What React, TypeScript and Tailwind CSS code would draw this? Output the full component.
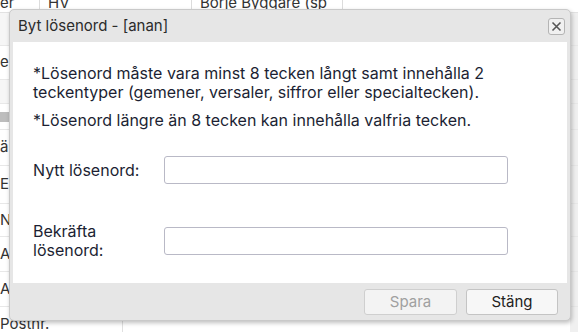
const FONT = "font-['Inter','Noto_Sans',sans-serif]";

type Row = { label: string; h: number; bar?: boolean; shade?: boolean };

const LEFT_ROWS: Row[] = [
  { label: "", h: 33, shade: true },
  { label: "er", h: 34 },
  { label: "", h: 24, shade: true },
  { label: "", h: 26, bar: true },
  { label: "äı", h: 36 },
  { label: "Ex", h: 38 },
  { label: "Na", h: 33 },
  { label: "Ac", h: 35 },
  { label: "Ac", h: 35 },
  { label: "Postnr.", h: 35 },
];

function Background() {
  return (
    <div className="flex h-full flex-col bg-white text-[15px] text-[#333]">
      <div className="flex h-[13px] shrink-0 items-end overflow-hidden border-b border-[#e2e2e2] leading-[18px]">
        <div className="w-[40px] shrink-0 border-r border-[#dcdcdc]">er</div>
        <div className="w-[152px] shrink-0 border-r border-[#dcdcdc] pl-2">HV</div>
        <div className="w-[151px] shrink-0 border-r border-[#dcdcdc] pl-2">Börje Byggare (sp</div>
        <div className="w-[151px] shrink-0 border-r border-[#dcdcdc]" />
        <div className="flex-1 bg-[#f4f4f4]" />
      </div>
      {LEFT_ROWS.map((row, i) => (
        <div
          key={i}
          style={{ height: row.h }}
          className={`flex shrink-0 items-center border-b border-[#e8e8e8] ${row.shade ? "bg-[#f6f6f6]" : ""}`}
        >
          <div className="flex h-full w-[123px] shrink-0 items-center border-r border-[#e0e0e0]">
            {row.bar ? <div className="h-[10px] w-[24px] bg-[#bdbdbd]" /> : row.label}
          </div>
          <div className="flex-1" />
          <div className="h-full w-[8px] bg-[#f0f0f0]" />
        </div>
      ))}
    </div>
  );
}

function Dialog() {
  return (
    <div
      className={`absolute left-[9px] top-[9px] flex h-[312px] w-[562px] flex-col rounded-[5px] border border-[#c9c9c9] bg-[#e6e6e6] shadow-[1px_2px_4px_rgba(0,0,0,0.25)] ${FONT}`}
    >
      <div className="flex h-[32px] shrink-0 items-center justify-between pl-[8px] pr-[5px]">
        <span className="text-[15px] text-[#2b2b2b]">Byt lösenord - [anan]</span>
        <button className="flex h-[17px] w-[17px] items-center justify-center rounded-[3px] border border-[#b4b4b4] bg-[#f0f0f0]">
          <svg width="11" height="11" viewBox="0 0 11 11">
            <path d="M1.5 1.5 L9.5 9.5 M9.5 1.5 L1.5 9.5" stroke="#555" strokeWidth="1.6" />
          </svg>
        </button>
      </div>
      <div className="mx-[3px] flex h-[241px] shrink-0 flex-col bg-white pl-[20px] pt-[22px] text-[16px] leading-[19px] text-[#1c1f33]">
        <p>
          *Lösenord måste vara minst 8 tecken långt samt innehålla 2
          <br />
          teckentyper (gemener, versaler, siffror eller specialtecken).
        </p>
        <p className="mt-[9px]">*Lösenord längre än 8 tecken kan innehålla valfria tecken.</p>
        <div className="mt-[26px] flex items-center">
          <label className="w-[131px] shrink-0">Nytt lösenord:</label>
          <input
            type="password"
            className="h-[28px] w-[344px] rounded-[3px] border border-[#b9b9c6] bg-white outline-none"
          />
        </div>
        <div className="mt-[38px] flex items-center">
          <label className="w-[131px] shrink-0">
            Bekräfta
            <br />
            lösenord:
          </label>
          <input
            type="password"
            className="h-[28px] w-[344px] rounded-[3px] border border-[#b9b9c6] bg-white outline-none"
          />
        </div>
      </div>
      <div className="flex flex-1 items-start justify-end gap-[9px] pr-[12px] pt-[6px]">
        <button
          disabled
          className="h-[26px] w-[93px] rounded-[3px] border border-[#cfcfcf] bg-[#f3f3f3] text-[15px] text-[#a0a0a0]"
        >
          Spara
        </button>
        <button className="h-[26px] w-[92px] rounded-[3px] border border-[#c4c4c4] bg-[#f7f7f7] text-[15px] text-[#222]">
          Stäng
        </button>
      </div>
    </div>
  );
}

export default function App() {
  return (
    <div className={`relative h-[332px] w-[578px] overflow-hidden ${FONT}`}>
      <Background />
      <Dialog />
    </div>
  );
}
